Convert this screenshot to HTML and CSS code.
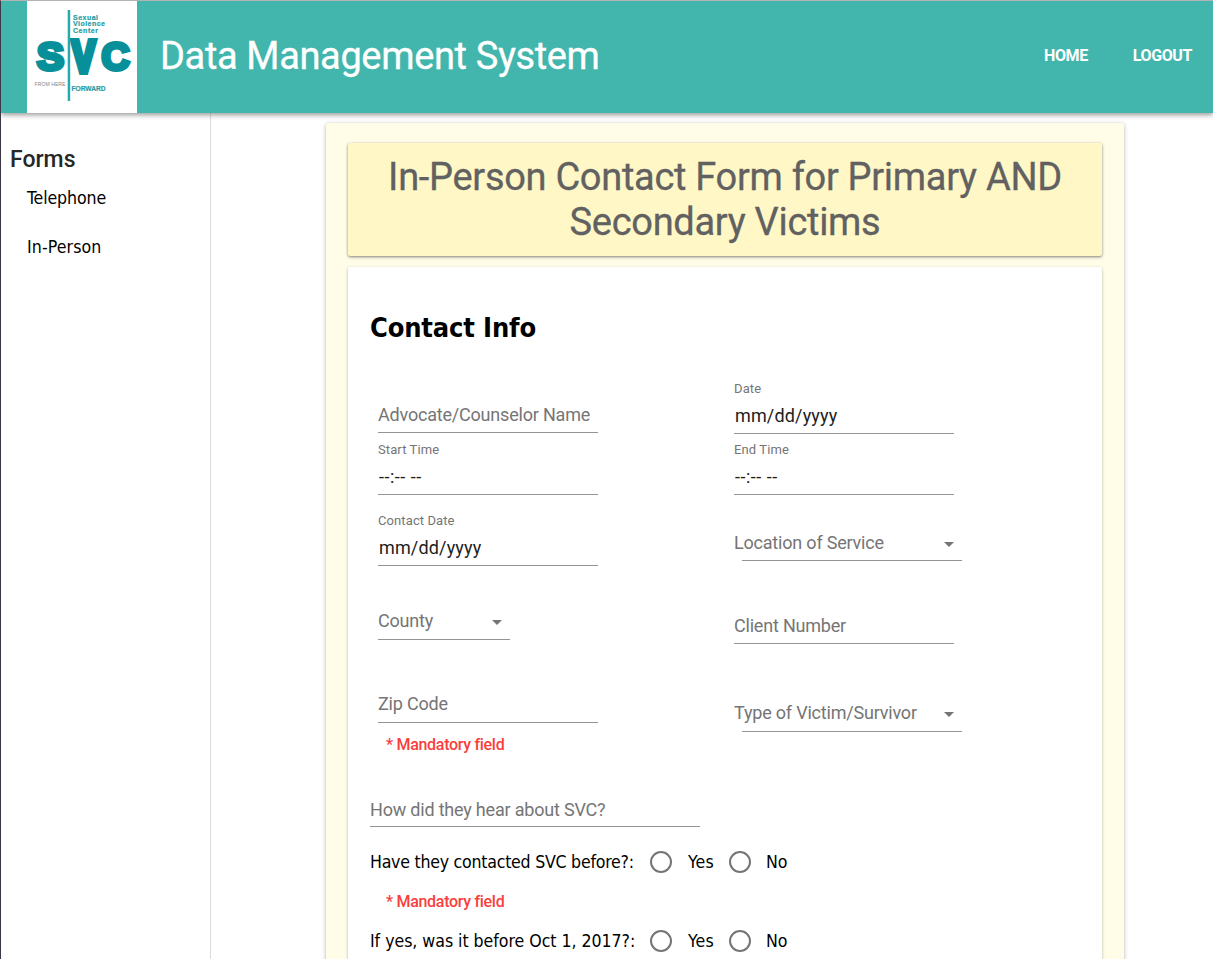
FILE: index.html
```html
<!DOCTYPE html>
<html lang="en">
<head>
<meta charset="utf-8">
<title>Data Management System</title>
<link rel="stylesheet" href="styles.css">
</head>
<body>
<div class="app">
  <header class="topbar">
    <svg class="logo" viewBox="0 0 110 112" width="110" height="112">
      <rect width="110" height="112" fill="#fff"/>
      <g class="logo-big">
        <text x="10" y="69" font-size="38" textLength="27" lengthAdjust="spacingAndGlyphs">S</text>
        <text class="logo-v" x="45" y="70.5" font-size="44" textLength="23" lengthAdjust="spacingAndGlyphs">V</text>
        <text x="74.5" y="69" font-size="38" textLength="28" lengthAdjust="spacingAndGlyphs">C</text>
      </g>
      <rect x="40.7" y="9" width="2.5" height="91" fill="#27a9b0"/>
      <g class="logo-small">
        <text x="46" y="18.5" textLength="25">Sexual</text>
        <text x="46" y="25.2" textLength="32">Violence</text>
        <text x="46" y="32" textLength="25">Center</text>
        <text x="44.5" y="89.5" textLength="34" lengthAdjust="spacingAndGlyphs">FORWARD</text>
      </g>
      <text class="logo-here" x="7.5" y="85" textLength="31" lengthAdjust="spacingAndGlyphs">FROM HERE</text>
    </svg>
    <h1 class="brand">Data Management System</h1>
    <nav class="nav"><a>HOME</a><a>LOGOUT</a></nav>
  </header>
  <div class="body">
    <aside class="sidebar">
      <h2>Forms</h2>
      <a class="s-tel">Telephone</a>
      <a class="s-inp">In-Person</a>
    </aside>
    <main class="main">
      <section class="sheet">
        <div class="title">In-Person Contact Form for Primary AND<br>Secondary Victims</div>
        <div class="card">
          <h3>Contact Info</h3>
          <div class="columns">
            <div class="col">
              <div class="field h63"><span class="hint">Advocate/Counselor Name</span></div>
              <div class="field h62"><label>Start Time</label><span class="time">--:-- --</span></div>
              <div class="field h71"><label>Contact Date</label><span class="value">mm/dd/yyyy</span></div>
              <div class="field h74 short low"><span class="hint">County</span><i class="caret"></i></div>
              <div class="field h83 low"><span class="hint">Zip Code</span></div>
              <p class="error">* Mandatory field</p>
            </div>
            <div class="col">
              <div class="field h64"><label>Date</label><span class="value">mm/dd/yyyy</span></div>
              <div class="field h61"><label>End Time</label><span class="time">--:-- --</span></div>
              <div class="field h66 shifted"><span class="hint">Location of Service</span><i class="caret"></i></div>
              <div class="field h83"><span class="hint">Client Number</span></div>
              <div class="field h88 shifted low"><span class="hint">Type of Victim/Survivor</span><i class="caret"></i></div>
            </div>
          </div>
          <div class="field wide"><span class="hint">How did they hear about SVC?</span></div>
          <div class="question"><span class="q q1">Have they contacted SVC before?:</span><i class="radio"></i><span class="yes">Yes</span><i class="radio"></i><span class="no">No</span></div>
          <p class="error second">* Mandatory field</p>
          <div class="question last"><span class="q q2">If yes, was it before Oct 1, 2017?:</span><i class="radio"></i><span class="yes">Yes</span><i class="radio"></i><span class="no">No</span></div>
        </div>
      </section>
    </main>
  </div>
</div>
</body>
</html>
```
FILE: styles.css
```css
* { box-sizing: border-box; }
body { margin: 0; background: #fff; font-family: Roboto, sans-serif; }
h1, h2, h3, p { margin: 0; }
.app {
  height: 959px;
  overflow: hidden;
  display: flex;
  flex-direction: column;
  border-top: 1px solid #b3b2b5;
  border-left: 1px solid #3b3745;
}
.topbar {
  height: 112px;
  flex: none;
  display: flex;
  align-items: center;
  padding: 0 21px 0 26px;
  background: #42b6ad;
  color: #fff;
  box-shadow: 0 2px 5px rgba(0,0,0,.4);
  z-index: 1;
}
.logo { display: block; font-family: "Liberation Sans", Arial, sans-serif; font-weight: bold; }
.logo-big { fill: #07909a; stroke: #07909a; stroke-width: 4px; }
.logo-v { stroke-width: 6px; }
.logo-small { fill: #2a9da4; font-size: 7px; stroke: #2a9da4; stroke-width: .2px; }
.logo-here { fill: #888; font-size: 6px; font-weight: normal; }
.brand { margin-left: 23px; font-size: 38px; line-height: 46px; font-weight: 400; letter-spacing: -.36px; padding-bottom: 2px; -webkit-text-stroke: .3px #fff; }
.nav { margin-left: auto; display: flex; gap: 45px; font-size: 16px; font-weight: 700; letter-spacing: -.4px; padding-bottom: 3px; }
.body { display: flex; flex: 1; min-height: 0; }
.sidebar {
  width: 210px;
  flex: none;
  border-right: 1px solid #dcdcdc;
  padding: 33px 0 0 9px;
  display: flex;
  flex-direction: column;
}
.sidebar h2 { font-size: 23px; line-height: 28px; font-weight: 500; color: #272727; }
.sidebar a { margin-left: 17px; font: 17.6px/22px "DejaVu Sans Condensed", "DejaVu Sans", sans-serif; color: #000; }
.s-tel { margin-top: 13px; letter-spacing: -.12px; }
.s-inp { margin-top: 27px; letter-spacing: .1px; }
.main { flex: 1; padding: 10px 88px 0 115px; }
.sheet {
  width: 798px;
  height: 900px;
  padding: 20px 22px 0;
  background: #fffde7;
  border-radius: 3px;
  box-shadow: 0 1px 4px rgba(0,0,0,.3);
}
.title {
  height: 113px;
  padding-top: 12px;
  background: #fff7c6;
  border-radius: 2px;
  box-shadow: 0 1px 3px rgba(0,0,0,.5);
  color: #616161;
  font-size: 38px;
  line-height: 45px;
  letter-spacing: -.3px;
  -webkit-text-stroke: .3px #616161;
  text-align: center;
}
.card {
  height: 760px;
  margin-top: 11px;
  padding: 44px 22px 0;
  background: #fff;
  border-radius: 2px;
  box-shadow: 0 1px 3px rgba(0,0,0,.3);
}
.card h3 { font: bold 27px/34px "DejaVu Sans Condensed", "DejaVu Sans", sans-serif; letter-spacing: -.15px; height: 59px; }
.columns { display: flex; height: 391px; padding-left: 8px; }
.col { width: 356px; flex: none; }
.field {
  width: 220px;
  display: flex;
  flex-wrap: wrap;
  align-content: flex-end;
  align-items: center;
  justify-content: space-between;
  padding-bottom: 6px;
  border-bottom: 1px solid #949494;
  font-size: 18px;
  line-height: 22px;
  white-space: nowrap;
}
.field.low { padding-bottom: 7px; }
.field.short { width: 132px; }
.field.shifted { margin-left: 8px; }
.shifted .hint { margin-left: -8px; }
.shifted .caret { margin-right: 8px; }
.short .caret { margin-right: 8px; }
.hint { color: #757575; letter-spacing: -.2px; }
.field label { width: 100%; font-size: 13px; line-height: 16px; margin-bottom: 8px; color: #757575; letter-spacing: .1px; }
.value, .time { color: #212121; padding-left: 1px; }
.value { letter-spacing: .15px; }
.time { letter-spacing: .5px; }
.caret { border: 5px solid transparent; border-top-color: #757575; border-bottom: 0; margin-top: 2px; }
.h61 { height: 61px; } .h62 { height: 62px; } .h63 { height: 63px; } .h64 { height: 64px; }
.h66 { height: 66px; } .h71 { height: 71px; } .h74 { height: 74px; } .h83 { height: 83px; } .h88 { height: 88px; }
.error { margin: 12px 0 0 8px; color: #f9403d; font-size: 16px; line-height: 20px; font-weight: 500; letter-spacing: -.3px; }
.wide { width: 330px; height: 66px; padding-bottom: 5px; }
.question { display: flex; align-items: center; height: 24px; margin-top: 23px; font: 17.6px/24px "DejaVu Sans Condensed", "DejaVu Sans", sans-serif; }
.q { width: 280px; white-space: nowrap; }
.q1 { letter-spacing: -.25px; }
.q2 { letter-spacing: -.04px; }
.radio { width: 22px; height: 22px; border: 2px solid #757575; border-radius: 50%; }
.yes { width: 42px; margin-left: 16px; margin-right: -1px; letter-spacing: .2px; }
.no { margin-left: 15px; }
.error.second { margin: 18px 0 0 16px; }
.question.last { margin-top: 17px; }
```
